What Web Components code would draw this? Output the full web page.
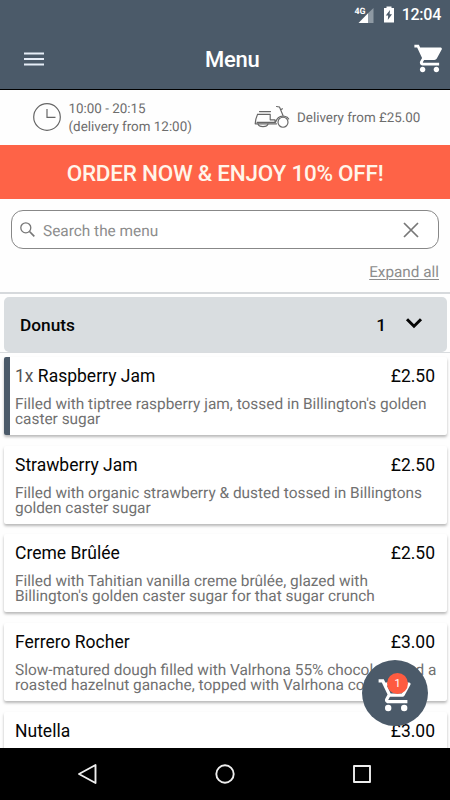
<!DOCTYPE html>
<html lang="en">
<head>
<meta charset="utf-8">
<title>Menu</title>
<style>
html,body{margin:0;height:100%;overflow:hidden;background:#fefefe;font-family:Roboto,"Liberation Sans",sans-serif}
</style>
</head>
<body>
<menu-screen></menu-screen>
<script>
const define = (name, html) => {
  const t = document.createElement('template');
  t.innerHTML = html;
  customElements.define(name, class extends HTMLElement {
    constructor() {
      super();
      this.attachShadow({mode: 'open'}).appendChild(t.content.cloneNode(true));
    }
  });
};

define('cart-icon', `
<style>:host{display:block;width:33px;height:33px}svg{display:block;width:100%;height:100%}</style>
<svg viewBox="0 0 24 24" fill="#fff"><path d="M7 18c-1.1 0-1.99.9-1.99 2S5.9 22 7 22s2-.9 2-2-.9-2-2-2zM1 2v2h2l3.6 7.59-1.35 2.45c-.16.28-.25.61-.25.96 0 1.1.9 2 2 2h12v-2H7.42c-.14 0-.25-.11-.25-.25l.03-.12.9-1.63h7.45c.75 0 1.41-.41 1.75-1.03l3.58-6.49c.08-.14.12-.31.12-.48 0-.55-.45-1-1-1H5.21l-.94-2H1zm16 16c-1.1 0-1.99.9-1.99 2s.89 2 1.99 2 2-.9 2-2-.9-2-2-2z"/></svg>`);

define('status-bar', `
<style>
:host{display:flex;justify-content:flex-end;align-items:center;height:29px;padding-right:9px;color:#fff;font-size:16px;font-weight:500;line-height:29px}
svg{display:block}.sig{width:21px;height:18px;margin-right:8px}.bat{width:12px;height:17px;margin-right:7px}
span{letter-spacing:-.25px}
</style>
<svg class="sig" viewBox="0 0 21 18"><text x="0.5" y="8" font-family="Roboto" font-size="8.800" font-weight="700" fill="#fff" text-rendering="geometricPrecision">4G</text><path d="M14 7.2L19.5 2v15H14z" fill="#8e99a3"/><path d="M4.5 17L14 7.2V17z" fill="#fff"/></svg>
<svg class="bat" viewBox="0 0 12 17"><path d="M1 2h2.5V.6h5V2H11v14.6H1z" fill="#fff"/><path d="M7 4L2.8 9.4h2.4L4.8 14 9 8.3H6.6z" fill="#4b5a69"/></svg>
<span>12:04</span>`);

define('app-header', `
<style>
:host{display:block;box-sizing:border-box;height:90px;background:#4b5a69;border-bottom:1.5px solid #000}
.bar{display:grid;grid-template-columns:1fr auto 1fr;align-items:center;height:60px;padding:0 4.5px 0 24px}
h1{margin:0 5px 0 0;padding-top:2px;color:#fff;font-size:22px;letter-spacing:-.3px;font-weight:500;line-height:58px}
.burger{width:20px;height:14px}
cart-icon{justify-self:end;margin-top:-2px}
</style>
<status-bar></status-bar>
<div class="bar"><svg class="burger" viewBox="0 0 20 14"><path d="M0 1.4h20M0 7h20M0 12.5h20" stroke="#e6edf7" stroke-width="2"/></svg><h1>Menu</h1><cart-icon></cart-icon></div>`);

define('info-row', `
<style>
:host{display:flex;height:55px;color:#6d6d6d;font-size:13.4px;text-rendering:geometricPrecision;line-height:18px;align-items:center}
div{display:flex;align-items:center;box-sizing:border-box}
.a{width:254px;padding-left:33px}.a svg{width:28px;height:28px;margin:-1px 7.5px 0 0}
.b svg{width:36px;height:24px;margin:-1px 7px 0 0}
svg{flex:none;display:block}
span{white-space:nowrap;padding-top:2px}
</style>
<div class="a"><svg viewBox="0 0 28 28" fill="none" stroke="#666"><circle cx="14" cy="14" r="13.3" stroke-width="1.2"/><path d="M14 6v8.4h8.5" stroke-width="1.2"/></svg><span>10:00 - 20:15<br>(delivery from 12:00)</span></div>
<div class="b"><svg viewBox="0 0 36 24" fill="none" stroke="#666" stroke-width="1.15" stroke-linejoin="round" stroke-linecap="round"><path d="M5.500 6.600h11M3.500 9.400h12.700v5.400h4.800M3.500 9.400C2.200 12 1.500 15 1.200 18.800h21.300M3 17.300h18.500c1.500-4.500 5-6.800 9-6 2 .4 3.600 1.400 4.200 2.700M21 14.800v2.500M22.500 1.500l3 .5 3.700 9M26.500 4.800l2-1"/><path d="M4 19c1 3.500 9 3.500 10 0"/><circle cx="29" cy="17.200" r="5"/></svg><span>Delivery from £25.00</span></div>`);

define('promo-banner', `
<style>:host{display:block;height:54px;background:#fe6347;color:#fff5ea;text-align:center;font-size:22.5px;letter-spacing:-.25px;font-weight:500;line-height:56px;white-space:nowrap}</style><slot></slot>`);

define('search-panel', `
<style>
:host{display:block;box-sizing:border-box;height:95px;padding:11px 11px 0;border-bottom:2px solid #d6d9dc;color:#8d8d8d;text-rendering:geometricPrecision}
.box{display:flex;align-items:center;box-sizing:border-box;height:39px;border:1.3px solid #888;border-radius:12px;padding:0 19px 0 8px;font-size:15.4px;background:#fff}
.ph{padding-top:2px}
.mag{width:15px;height:15px;margin-right:8px}.x{width:16px;height:16px;margin-left:auto}
.ex{display:block;text-align:right;font-size:15.3px;line-height:20px;margin-top:13px;text-decoration:underline;text-decoration-thickness:1px;text-underline-offset:2px}
</style>
<div class="box"><svg class="mag" viewBox="0 0 15 15" fill="none" stroke="#777" stroke-width="1.3"><circle cx="5.800" cy="5.800" r="5"/><path d="M9.500 9.500l4.800 4.800" stroke-width="1.700"/></svg><span class="ph">Search the menu</span><svg class="x" viewBox="0 0 16 16"><path d="M1 1l14 14M15 1L1 15" stroke="#777" stroke-width="1.700"/></svg></div>
<span class="ex">Expand all</span>`);

define('category-bar', `
<style>
:host{display:block;padding:3px 3px 0 4px;border-bottom:1px solid #d9dcdf;box-sizing:border-box;flex:none;height:59px}
div{display:flex;align-items:center;height:55px;background:#d9dde0;border-radius:5px;padding:0 24px 0 16px;font-size:17.3px;font-weight:500;color:#050505;box-sizing:border-box}
.n{margin-left:auto}svg{width:18px;height:12px;margin:-3px 0 0 19px}
</style>
<div><slot></slot><span class="n"><slot name="count"></slot></span><svg viewBox="0 0 18 12"><path d="M2 2.200l7 7 7-7" fill="none" stroke="#050505" stroke-width="3"/></svg></div>`);

define('menu-item', `
<style>
:host{display:block;box-sizing:border-box;height:78px;margin:0 3px 10.700px 4px;padding:9px 12px 0 11px;background:#fff;border-radius:2px;box-shadow:0 2px 3px rgba(0,0,0,.28)}
:host([selected]){border-left:6px solid #4b5a69;padding-left:5px}
.top{display:flex;justify-content:space-between;font-size:17.500px;line-height:20px;color:#050505}
p{margin:11px 0 0;font-size:15.42px;text-rendering:geometricPrecision;line-height:15px;color:#717171;white-space:nowrap}
::slotted([slot=qty]){color:#555}
</style>
<div class="top"><span><slot name="qty"></slot><slot name="title"></slot></span><slot name="price"></slot></div>
<p><slot></slot></p>`);

define('cart-fab', `
<style>
:host{position:absolute;left:362px;top:660px;width:66px;height:66px;border-radius:50%;background:#4b5a69}
svg{position:absolute;left:15.4px;top:15.8px;width:38.4px;height:38.4px}
b{position:absolute;left:25px;top:13px;width:21px;height:21px;border-radius:50%;background:#fe5b40;color:#fff;font-size:11px;line-height:21px;text-align:center;font-weight:400}
</style><svg viewBox="0 0 24 24" fill="#fff"><path d="M15.550 13c.75 0 1.410-.41 1.750-1.030l3.580-6.490A.996.996 0 0 0 20.010 4H5.210l-.94-2H1v2h2l3.600 7.590-1.350 2.440C4.520 15.370 5.480 17 7 17h12v-2H7l1.100-2h7.450zM6.160 6h12.150l-2.760 5H8.530L6.160 6z"/><circle cx="7" cy="20" r="2"/><circle cx="17" cy="20" r="2"/></svg><b><slot></slot></b>`);

define('nav-bar', `
<style>
:host{display:grid;grid-template-columns:repeat(3,137px);justify-content:center;align-items:center;justify-items:center;height:52px;background:#000}
svg{width:22px;height:22px;fill:none;stroke:#eee;stroke-width:1.900;stroke-linejoin:round}
</style>
<svg viewBox="0 0 22 22"><path d="M18.500 2v18L2 11z"/></svg>
<svg viewBox="0 0 22 22"><circle cx="11" cy="11" r="8.700"/></svg>
<svg viewBox="0 0 22 22"><rect x="3" y="3" width="16" height="16"/></svg>`);

define('menu-screen', `
<style>
:host{display:flex;flex-direction:column;position:relative;width:450px;height:800px;overflow:hidden;background:#fefefe}
app-header,info-row,promo-banner,search-panel,nav-bar{flex:none}
main{flex:1;min-height:0;overflow:hidden;padding-top:4px}
</style>
<app-header></app-header>
<info-row></info-row>
<promo-banner>ORDER NOW &amp; ENJOY 10% OFF!</promo-banner>
<search-panel></search-panel>
<category-bar>Donuts<span slot="count">1</span></category-bar>
<main>
<menu-item selected><span slot="qty">1x </span><span slot="title">Raspberry Jam</span><span slot="price">£2.50</span>Filled with tiptree raspberry jam, tossed in Billington's golden<br>caster sugar</menu-item>
<menu-item><span slot="title">Strawberry Jam</span><span slot="price">£2.50</span>Filled with organic strawberry &amp; dusted tossed in Billingtons<br>golden caster sugar</menu-item>
<menu-item><span slot="title">Creme Brûlée</span><span slot="price">£2.50</span>Filled with Tahitian vanilla creme brûlée, glazed with<br>Billington's golden caster sugar for that sugar crunch</menu-item>
<menu-item><span slot="title">Ferrero Rocher</span><span slot="price">£3.00</span>Slow-matured dough filled with Valrhona 55% chocolate and a<br>roasted hazelnut ganache, topped with Valrhona cocoa</menu-item>
<menu-item><span slot="title">Nutella</span><span slot="price">£3.00</span></menu-item>
</main>
<nav-bar></nav-bar>
<cart-fab>1</cart-fab>`);
</script>
</body>
</html>
